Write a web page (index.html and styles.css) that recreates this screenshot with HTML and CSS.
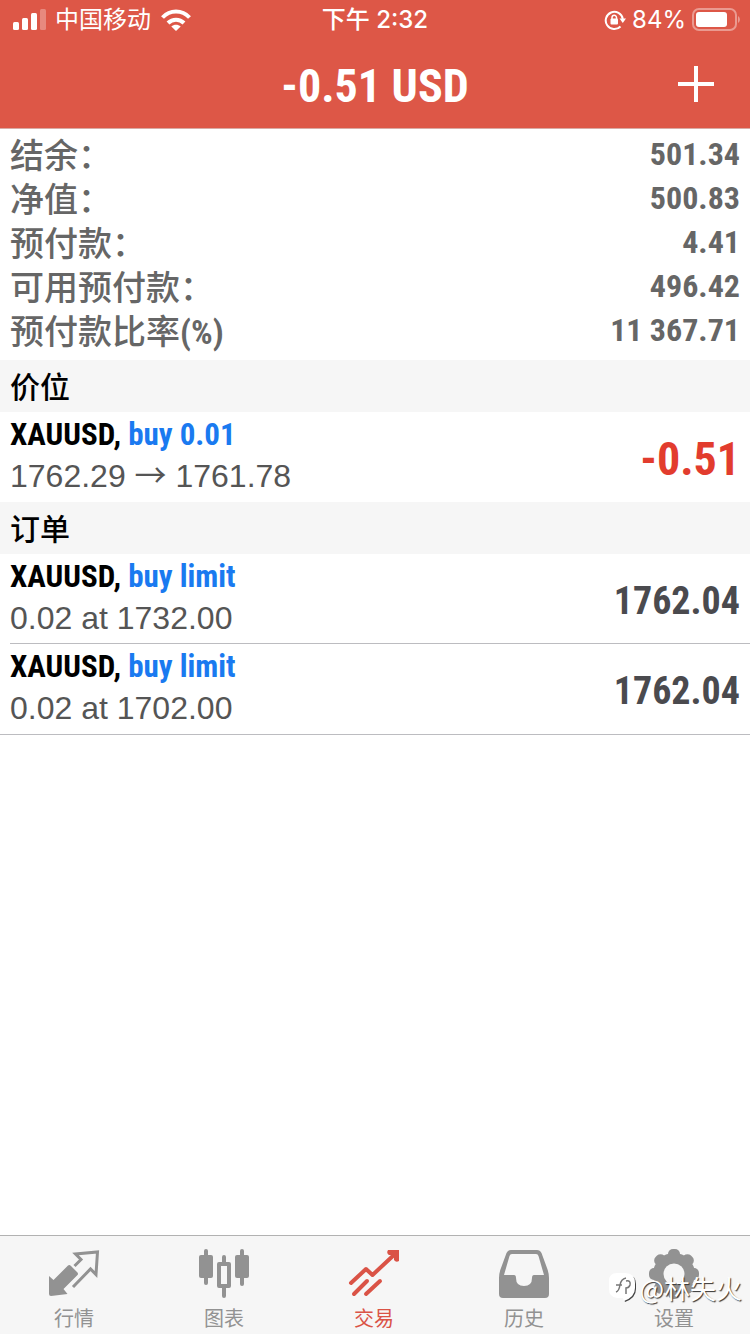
FILE: index.html
```html
<!DOCTYPE html>
<html lang="zh-CN">
<head>
    <meta charset="utf-8">
    <meta name="viewport" content="width=device-width, initial-scale=1">
    <title>交易</title>
    <link rel="stylesheet" href="styles.css">
</head>
<body>
    <header class="header">
        <div class="status">
            <div class="status-left">
                <svg width="36" height="24" viewBox="0 0 36 24" fill="#fff">
                    <rect x="3" y="14" width="6" height="8" rx="1.5"/>
                    <rect x="12" y="10" width="6" height="12" rx="1.5"/>
                    <rect x="21" y="5" width="6" height="17" rx="1.5"/>
                    <rect x="30" y="1" width="6" height="21" rx="1.5" opacity="0.3"/>
                </svg>
                <span>中国移动</span>
                <svg width="32" height="24" viewBox="0 0 32 24" fill="none" stroke="#fff" stroke-width="4">
                    <path d="M2.500 9.500C10 1.500 22 1.500 29.500 9.500"/>
                    <path d="M8 15C12.500 10.500 19.500 10.500 24 15"/>
                    <path d="M16 23L11.300 18.500C14 16 18 16 20.700 18.500Z" fill="#fff" stroke="none"/>
                </svg>
            </div>
            <div class="status-time">下午 2:32</div>
            <div class="status-right">
                <svg width="22" height="22" viewBox="0 0 22 22" fill="none" stroke="#fff" stroke-width="2">
                    <path d="M16.500 17.500A8.600 8.600 0 1 1 18.800 10"/>
                    <path d="M15.500 9.500H22L18.800 14Z" fill="#fff" stroke="none"/>
                    <rect x="6.500" y="9.500" width="7.500" height="6" rx="1" fill="#fff" stroke="none"/>
                    <path d="M8 10V8.500A2.200 2.200 0 0 1 12.500 8.500V10" stroke-width="1.500"/>
                </svg>
                <span>84%</span>
                <svg width="48" height="24" viewBox="0 0 48 24">
                    <rect x="1" y="1" width="43" height="21" rx="6" fill="none" stroke="#fff" stroke-width="2" opacity="0.4"/>
                    <rect x="4" y="4" width="31" height="15" rx="3" fill="#fff"/>
                    <path d="M46 8C48.500 9.500 48.500 13.500 46 15Z" fill="#fff" opacity="0.4"/>
                </svg>
            </div>
        </div>
        <div class="navbar">
            <h1>-0.51 USD</h1>
            <button class="add" type="button" aria-label="新订单">
                <svg width="36" height="36" viewBox="0 0 36 36" stroke="#fff" stroke-width="4">
                    <path d="M18 0V36M0 18H36"/>
                </svg>
            </button>
        </div>
    </header>

    <main class="content">
        <dl class="summary">
            <div><dt>结余：</dt><dd>501.34</dd></div>
            <div><dt>净值：</dt><dd>500.83</dd></div>
            <div><dt>预付款：</dt><dd>4.41</dd></div>
            <div><dt>可用预付款：</dt><dd>496.42</dd></div>
            <div><dt>预付款比率<b>(%)</b></dt><dd>11 367.71</dd></div>
        </dl>

        <h2>价位</h2>
        <ul class="list">
            <li>
                <div>
                    <p class="symbol">XAUUSD, <span>buy 0.01</span></p>
                    <p class="detail">1762.29 <span class="arrow">→</span> 1761.78</p>
                </div>
                <strong class="profit">-0.51</strong>
            </li>
        </ul>

        <h2>订单</h2>
        <ul class="list orders">
            <li>
                <div>
                    <p class="symbol">XAUUSD, <span>buy limit</span></p>
                    <p class="detail">0.02 at 1732.00</p>
                </div>
                <strong class="price">1762.04</strong>
            </li>
            <li>
                <div>
                    <p class="symbol">XAUUSD, <span>buy limit</span></p>
                    <p class="detail">0.02 at 1702.00</p>
                </div>
                <strong class="price">1762.04</strong>
            </li>
        </ul>
    </main>

    <nav class="tabbar">
        <a href="#">
            <svg width="52" height="52" viewBox="0 0 52 52" fill="#929292">
                <path d="M1 27L5.500 31L20 16.500Q21.500 15.500 23 17L29.500 23.500Q30.500 25 29.500 26L15.500 40L19.500 45L3 47Q1 47 1 45Z"/>
                <path d="M26.500 17L33 10.500L27.500 5L49.500 3L48 25.500L42.500 20L25 38" fill="none" stroke="#929292" stroke-width="3"/>
            </svg>
            <span>行情</span>
        </a>
        <a href="#">
            <svg width="52" height="52" viewBox="0 0 52 52" fill="#929292">
                <rect x="1" y="6" width="14" height="23" rx="2"/>
                <rect x="6" y="0" width="4" height="36" rx="2"/>
                <rect x="37" y="6" width="14" height="23" rx="2"/>
                <rect x="42" y="0" width="4" height="37" rx="2"/>
                <path d="M24 14V8Q24 6 26 6T28 8V14ZM24 38V47Q24 49 26 49T28 47V38Z"/>
                <rect x="21" y="15" width="10" height="22" fill="none" stroke="#929292" stroke-width="4" stroke-linejoin="round"/>
            </svg>
            <span>图表</span>
        </a>
        <a class="active" href="#">
            <svg width="52" height="52" viewBox="0 0 52 52" fill="none" stroke="#da5346" stroke-width="4" stroke-linecap="round" stroke-linejoin="round">
                <path d="M3 34L18 20L24.500 26L47 5"/>
                <path d="M40 1H51V12Q48 14 46 11V6H41Q38 4 40 1Z" fill="#da5346" stroke="none"/>
                <path d="M6 45L19 32M18 45L32 32"/>
            </svg>
            <span>交易</span>
        </a>
        <a href="#">
            <svg width="52" height="52" viewBox="0 0 52 52">
                <path d="M13 1H39Q42 1 43.500 4L49 19Q51 24 51 29V45Q51 49 47 49H5Q1 49 1 45V29Q1 24 3 19L8.500 4Q10 1 13 1ZM14 5Q12 5 11.500 7L6 26H16Q18 26 18 29Q18 37 26 37T34 29Q34 26 36 26H46L40.500 7Q40 5 38 5Z" fill="#929292" fill-rule="evenodd"/>
            </svg>
            <span>历史</span>
        </a>
        <a href="#">
            <svg width="52" height="52" viewBox="0 0 52 52">
                <g fill="#929292">
                    <circle cx="26" cy="25" r="21"/>
                    <rect x="20" y="0" width="12" height="50" rx="5"/>
                    <rect x="20" y="0" width="12" height="50" rx="5" transform="rotate(45 26 25)"/>
                    <rect x="20" y="0" width="12" height="50" rx="5" transform="rotate(90 26 25)"/>
                    <rect x="20" y="0" width="12" height="50" rx="5" transform="rotate(135 26 25)"/>
                </g>
                <circle cx="26" cy="25" r="10.500" fill="#f6f6f6"/>
            </svg>
            <span>设置</span>
        </a>
        <div class="watermark">
            <svg width="28" height="32" viewBox="0 0 28 32">
                <path d="M20 3Q27 4 27 12V17Q27 26 16 30L15 27Q25 24 25 14Z" fill="#444"/>
                <path d="M8 1H16Q26 1 26 11V16Q26 25 15 29L14 26H8Q0 25 0 17V9Q0 1 8 1Z" fill="#fff"/>
                <path d="M7 20Q10 19 11 13Q12 7 17 6M7 13H13M17 9Q22 8 21 13Q20 16 17 16V22" fill="none" stroke="#777" stroke-width="1.500"/>
            </svg>
            <span>@林失火</span>
        </div>
    </nav>
</body>
</html>
```
FILE: styles.css
```css
* {
    box-sizing: border-box;
    margin: 0;
    padding: 0;
}
body {
    display: flex;
    flex-direction: column;
    min-height: 100vh;
    background: #fff;
    font-family: "Liberation Sans", "Noto Sans CJK SC", sans-serif;
}
svg {
    display: block;
    flex: none;
}

/* header */
.header {
    background: #dd5747;
    color: #fff;
    border-bottom: 1px solid #d9aaa4;
}
.status {
    display: grid;
    grid-template-columns: 1fr auto 1fr;
    align-items: center;
    height: 40px;
    padding: 0 10px;
    font: 24px/40px Inter, "Noto Sans CJK SC", sans-serif;
}
.status-left,
.status-right {
    display: flex;
    align-items: center;
    gap: 9px;
}
.status-right {
    justify-content: flex-end;
    gap: 6px;
}
.status-time {
    font-weight: 500;
}
.navbar {
    display: grid;
    grid-template-columns: 1fr auto 1fr;
    align-items: center;
    height: 88px;
    padding: 0 36px;
}
.navbar h1 {
    grid-column: 2;
    padding-top: 4px;
    font: bold 46px/84px "Roboto Condensed", "Liberation Sans", sans-serif;
}
.add {
    justify-self: end;
    border: 0;
    background: none;
}

/* account summary */
.summary {
    padding: 3px 10px 8px;
    color: #666;
}
.summary div {
    display: flex;
    justify-content: space-between;
    font-size: 34px;
    line-height: 44px;
}
.summary dt {
    font-family: "Noto Sans CJK SC", sans-serif;
    font-weight: 500;
}
.summary dd,
.summary b {
    font-family: "Roboto Condensed", "Liberation Sans", sans-serif;
    font-weight: bold;
}
.summary dd {
    font-size: 32px;
}
.summary b {
    line-height: 1;
}

/* positions and orders */
h2 {
    padding: 0 10px 2px;
    background: #f6f6f6;
    font: 500 30px/50px "Noto Sans CJK SC", sans-serif;
}
.list {
    list-style: none;
}
.list li {
    display: flex;
    align-items: center;
    justify-content: space-between;
    height: 90px;
    padding: 0 10px 2px 0;
    margin-left: 10px;
}
.orders {
    border-bottom: 1px solid #bcbcc0;
}
.orders li:first-child {
    border-bottom: 1px solid #bcbcc0;
}
.symbol {
    font: bold 31px/40px "Roboto Condensed", "Liberation Sans", sans-serif;
}
.symbol span {
    color: #1a7af0;
}
.detail {
    color: #555;
    font-size: 32px;
    line-height: 42px;
}
.arrow {
    font-family: "Noto Sans CJK SC", sans-serif;
    line-height: 1;
}
.profit,
.price {
    padding-top: 6px;
    font: bold 46px/60px "Roboto Condensed", "Liberation Sans", sans-serif;
    color: #e23c2e;
}
.price {
    font-size: 38px;
    color: #4a4a4e;
}

/* bottom tabs */
.tabbar {
    position: relative;
    display: grid;
    grid-template-columns: repeat(5, 1fr);
    margin-top: auto;
    border-top: 1px solid #b2b2b2;
    background: #f6f6f6;
}
.tabbar a {
    display: flex;
    flex-direction: column;
    align-items: center;
    gap: 1px;
    padding: 13px 2px 0 0;
    color: #929292;
    font: 20px/32px "Noto Sans CJK SC", sans-serif;
    text-decoration: none;
}
.tabbar .active {
    color: #da5346;
}
.watermark {
    position: absolute;
    right: 8px;
    bottom: 28px;
    display: flex;
    align-items: center;
    gap: 2px;
    color: #fff;
    font: 26px/36px "Noto Sans CJK SC", sans-serif;
    text-shadow: 1px 1px 1px #333;
}
```
